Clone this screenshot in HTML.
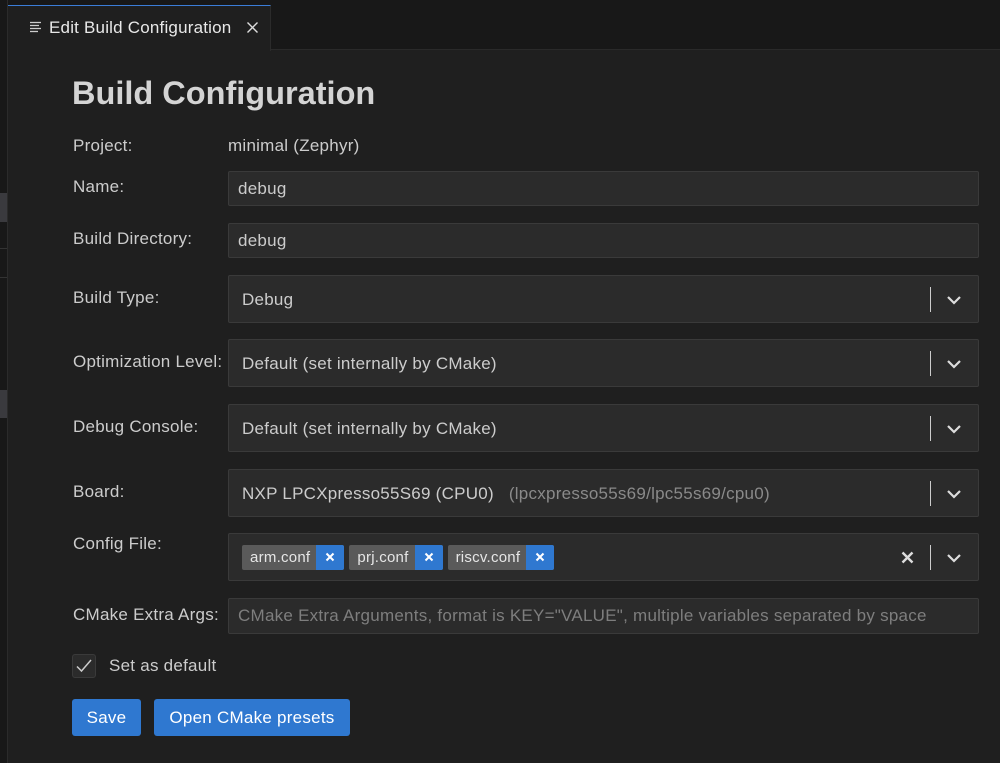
<!DOCTYPE html>
<html><head><meta charset="utf-8"><style>
*{box-sizing:border-box;margin:0;padding:0}
body{width:1000px;height:763px;background:#1f1f1f;font-family:"Liberation Sans",sans-serif;color:#cccccc;position:relative;overflow:hidden;font-size:17px;letter-spacing:0.25px}
.abs{position:absolute}
.lbl{position:absolute;left:73px;font-size:17px;color:#cccccc}
.inp{position:absolute;left:228px;width:751px;background:#2b2b2b;border:1px solid #3a3a3a;border-radius:2px;color:#cccccc;padding-left:9px;display:flex;align-items:center;font-size:17px}
.sel{height:48px;padding-left:13px;padding-top:2px}
.sep{position:absolute;right:47px;top:11px;width:1px;height:25px;background:#cccccc}
.chev{position:absolute;right:16px;top:16px}
.tag{display:inline-flex;height:25px;background:#5a5a5a;border-radius:2px;margin-right:5px;align-items:center;font-size:15px;color:#e6e6e6;overflow:hidden}
.tag span{padding:0 6px 0 8px}
.tag b{background:#2f78d0;width:28px;height:25px;display:flex;align-items:center;justify-content:center}
.btn{position:absolute;top:699px;height:37px;background:#2f78d0;border-radius:3px;color:#fff;font-size:17px;display:flex;align-items:center;justify-content:center}
</style></head><body>
<div class="abs" style="left:0;top:0;width:1000px;height:50px;background:#181818;border-bottom:1px solid #2a2a2a"></div>
<div class="abs" style="left:0;top:0;width:8px;height:763px;background:#181818;border-right:1px solid #2b2b2b"></div>
<div class="abs" style="left:0;top:193px;width:7px;height:29px;background:#3a3a3e"></div>
<div class="abs" style="left:0;top:248px;width:7px;height:1px;background:#333"></div>
<div class="abs" style="left:0;top:277px;width:7px;height:1px;background:#333"></div>
<div class="abs" style="left:0;top:390px;width:7px;height:28px;background:#3a3a3e"></div>
<div class="abs" style="left:8px;top:5px;width:263px;height:46px;background:#1f1f1f;border-top:1px solid #3b7dd8;border-right:1px solid #2b2b2b"></div>
<svg class="abs" style="left:29px;top:21px" width="14" height="13" viewBox="0 0 14 13"><g stroke="#ccc" stroke-width="1.3"><line x1="1" y1="1.5" x2="12" y2="1.5"/><line x1="1" y1="4.5" x2="10" y2="4.5"/><line x1="1" y1="7.5" x2="12" y2="7.5"/><line x1="1" y1="10.5" x2="9" y2="10.5"/></g></svg>
<div class="abs" style="left:49px;top:18px;font-size:17px;color:#e8e8e8;letter-spacing:0.2px">Edit Build Configuration</div>
<svg class="abs" style="left:246px;top:21px" width="13" height="13" viewBox="0 0 13 13"><path d="M1.5 1.5L11.5 11.5M11.5 1.5L1.5 11.5" stroke="#ddd" stroke-width="1.4"/></svg>
<div class="abs" style="left:72px;top:75px;font-size:32.5px;font-weight:bold;color:#d4d4d4;letter-spacing:0">Build Configuration</div>
<div class="lbl" style="top:136px">Project:</div><div class="abs" style="left:228px;top:136px">minimal (Zephyr)</div>
<div class="lbl" style="top:177px">Name:</div><div class="inp" style="top:171px;height:35px">debug</div>
<div class="lbl" style="top:229px">Build Directory:</div><div class="inp" style="top:223px;height:35px">debug</div>
<div class="lbl" style="top:288px">Build Type:</div>
<div class="inp sel" style="top:275px">Debug<div class="sep"></div><svg class="chev" width="16" height="16" viewBox="0 0 16 16"><path d="M2 5L8 11L14 5" fill="none" stroke="#ddd" stroke-width="2.2"/></svg></div>
<div class="lbl" style="top:352px">Optimization Level:</div>
<div class="inp sel" style="top:339px">Default (set internally by CMake)<div class="sep"></div><svg class="chev" width="16" height="16" viewBox="0 0 16 16"><path d="M2 5L8 11L14 5" fill="none" stroke="#ddd" stroke-width="2.2"/></svg></div>
<div class="lbl" style="top:417px">Debug Console:</div>
<div class="inp sel" style="top:404px">Default (set internally by CMake)<div class="sep"></div><svg class="chev" width="16" height="16" viewBox="0 0 16 16"><path d="M2 5L8 11L14 5" fill="none" stroke="#ddd" stroke-width="2.2"/></svg></div>
<div class="lbl" style="top:482px">Board:</div>
<div class="inp sel" style="top:469px">NXP LPCXpresso55S69 (CPU0)<span style="color:#8a8a8a;margin-left:15px">(lpcxpresso55s69/lpc55s69/cpu0)</span><div class="sep"></div><svg class="chev" width="16" height="16" viewBox="0 0 16 16"><path d="M2 5L8 11L14 5" fill="none" stroke="#ddd" stroke-width="2.2"/></svg></div>
<div class="lbl" style="top:534px">Config File:</div>
<div class="inp sel" style="top:533px;padding-left:13px;padding-top:0"><div class="tag"><span>arm.conf</span><b><svg width="10" height="10"><path d="M1.5 1.5L8.5 8.5M8.5 1.5L1.5 8.5" stroke="#fff" stroke-width="2"/></svg></b></div><div class="tag"><span>prj.conf</span><b><svg width="10" height="10"><path d="M1.5 1.5L8.5 8.5M8.5 1.5L1.5 8.5" stroke="#fff" stroke-width="2"/></svg></b></div><div class="tag"><span>riscv.conf</span><b><svg width="10" height="10"><path d="M1.5 1.5L8.5 8.5M8.5 1.5L1.5 8.5" stroke="#fff" stroke-width="2"/></svg></b></div>
<svg class="abs" style="right:64px;top:17px" width="13" height="13"><path d="M1.5 1.5L11.5 11.5M11.5 1.5L1.5 11.5" stroke="#ddd" stroke-width="2.4"/></svg>
<div class="sep"></div><svg class="chev" width="16" height="16" viewBox="0 0 16 16"><path d="M2 5L8 11L14 5" fill="none" stroke="#ddd" stroke-width="2.2"/></svg></div>
<div class="lbl" style="top:605px">CMake Extra Args:</div>
<div class="inp" style="top:598px;height:36px;color:#7e7e7e">CMake Extra Arguments, format is KEY="VALUE", multiple variables separated by space</div>
<div class="abs" style="left:72px;top:654px;width:24px;height:24px;background:#2b2b2b;border:1px solid #3a3a3a;border-radius:3px"><svg width="22" height="22" viewBox="0 0 22 22"><path d="M4 11.5L8.5 16L18 5" fill="none" stroke="#ccc" stroke-width="1.5"/></svg></div>
<div class="abs" style="left:109px;top:656px">Set as default</div>
<div class="btn" style="left:72px;width:69px">Save</div>
<div class="btn" style="left:154px;width:196px">Open CMake presets</div>
</body></html>
